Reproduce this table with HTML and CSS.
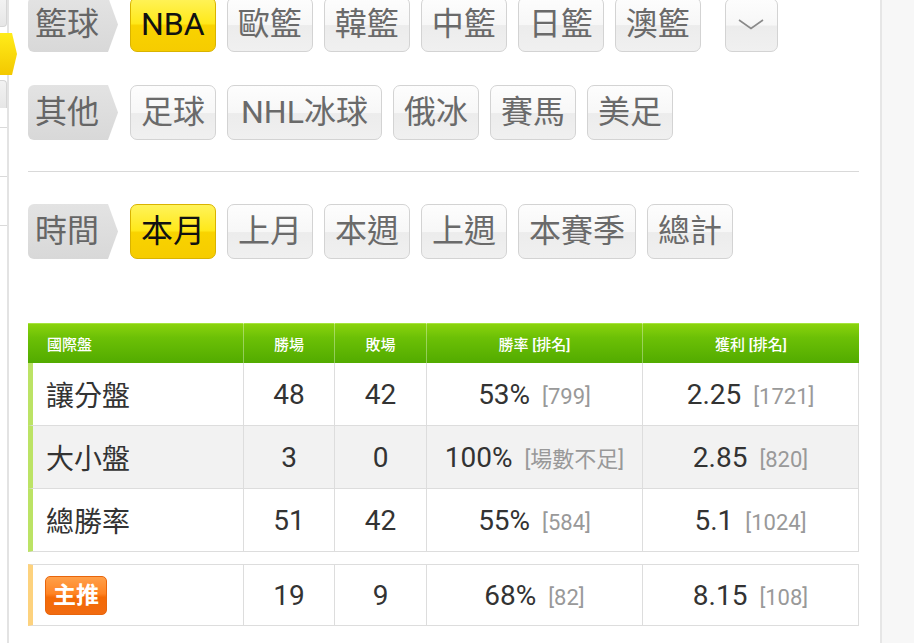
FILE: index.html
```html
<!DOCTYPE html>
<html lang="zh-Hant">
<head>
<meta charset="utf-8">
<title>戰績</title>
<link rel="stylesheet" href="styles.css">
</head>
<body>
<div class="page">
  <aside class="rail">
    <div class="rail-tab"></div>
    <div class="rail-hex"></div>
    <div class="rail-tab rail-tab2"></div>
    <div class="rail-line"></div>
    <div class="rail-line"></div>
    <div class="rail-line"></div>
  </aside>

  <main class="content">
    <div class="filter-row first">
      <span class="flabel">籃球</span>
      <span class="chip active latin">NBA</span>
      <span class="chip">歐籃</span>
      <span class="chip">韓籃</span>
      <span class="chip">中籃</span>
      <span class="chip">日籃</span>
      <span class="chip">澳籃</span>
      <span class="chip more"><svg width="26" height="11" viewBox="0 0 26 11"><polyline points="1,1 13,9.5 25,1" fill="none" stroke="#8a8a8a" stroke-width="1.6"/></svg></span>
    </div>
    <div class="filter-row second">
      <span class="flabel">其他</span>
      <span class="chip">足球</span>
      <span class="chip wide">NHL冰球</span>
      <span class="chip">俄冰</span>
      <span class="chip">賽馬</span>
      <span class="chip">美足</span>
    </div>

    <div class="divider"></div>

    <div class="filter-row time">
      <span class="flabel">時間</span>
      <span class="chip active">本月</span>
      <span class="chip">上月</span>
      <span class="chip">本週</span>
      <span class="chip">上週</span>
      <span class="chip">本賽季</span>
      <span class="chip">總計</span>
    </div>

    <table class="stats">
      <colgroup>
        <col class="c-name"><col class="c-num"><col class="c-num2"><col class="c-wide"><col class="c-wide">
      </colgroup>
      <thead>
        <tr>
          <th class="h-left">國際盤</th>
          <th>勝場</th>
          <th>敗場</th>
          <th>勝率 [排名]</th>
          <th>獲利 [排名]</th>
        </tr>
      </thead>
      <tbody>
        <tr>
          <td class="name">讓分盤</td>
          <td>48</td>
          <td>42</td>
          <td>53%<span class="rank">[799]</span></td>
          <td>2.25<span class="rank">[1721]</span></td>
        </tr>
        <tr class="alt">
          <td class="name">大小盤</td>
          <td>3</td>
          <td>0</td>
          <td>100%<span class="rank">[場數不足]</span></td>
          <td>2.85<span class="rank">[820]</span></td>
        </tr>
        <tr>
          <td class="name">總勝率</td>
          <td>51</td>
          <td>42</td>
          <td>55%<span class="rank">[584]</span></td>
          <td>5.1<span class="rank">[1024]</span></td>
        </tr>
      </tbody>
    </table>

    <table class="stats featured">
      <colgroup>
        <col class="c-name"><col class="c-num"><col class="c-num2"><col class="c-wide"><col class="c-wide">
      </colgroup>
      <tbody>
        <tr>
          <td class="name"><span class="badge">主推</span></td>
          <td>19</td>
          <td>9</td>
          <td>68%<span class="rank">[82]</span></td>
          <td>8.15<span class="rank">[108]</span></td>
        </tr>
      </tbody>
    </table>
  </main>

  <div class="gutter"></div>
</div>
</body>
</html>
```

FILE: styles.css
```css
* { box-sizing: border-box; }

html, body {
  margin: 0;
  padding: 0;
  background: #ffffff;
  height: 100%;
  overflow: hidden;
}

body {
  font-family: Roboto, "Noto Sans CJK TC", "Noto Sans", sans-serif;
  color: #333;
}

.page {
  display: flex;
  width: 914px;
  height: 643px;
}

/* left rail */
.rail {
  position: relative;
  z-index: 1;
  width: 9px;
  flex: none;
  border-right: 2px solid #e3e3e3;
  display: flex;
  flex-direction: column;
}

.rail-tab {
  width: 7px;
  height: 27px;
  background: linear-gradient(#f2f2f2, #e6e6e6);
  border-bottom: 1px solid #d6d6d6;
  border-right: 1px solid #d6d6d6;
  border-radius: 0 0 4px 0;
}

.rail-hex {
  width: 17px;
  height: 42px;
  margin-top: 6px;
  background: linear-gradient(#ffec1a, #f3c800);
  clip-path: polygon(0 0, 12px 0, 100% 50%, 12px 100%, 0 100%);
}

.rail-tab2 {
  height: 28px;
  margin-top: 5px;
  border-radius: 0 4px 0 0;
  border-top: 1px solid #d6d6d6;
  border-bottom: none;
}

.rail-line {
  width: 7px;
  height: 49px;
  border-bottom: 1px solid #dadada;
}
.rail-tab2 + .rail-line { height: 20px; }

/* content */
.content {
  flex: 1;
  padding: 0 21px 0 19px;
}

.filter-row {
  display: flex;
  align-items: center;
  gap: 11px;
  height: 55px;
}
.filter-row.first { margin-top: -3px; }
.filter-row.second { margin-top: 33px; }
.filter-row.time { margin-top: 32px; }

.flabel {
  height: 55px;
  line-height: 55px;
  padding: 0 19px 0 7px;
  margin-right: 1px;
  font-size: 32px;
  color: #666;
  background: linear-gradient(#e3e3e3, #d8d8d8);
  border-radius: 6px 0 0 6px;
  clip-path: polygon(0 0, calc(100% - 10px) 0, 100% 50%, calc(100% - 10px) 100%, 0 100%);
  white-space: nowrap;
}

.chip {
  height: 55px;
  line-height: 53px;
  padding: 0 10px;
  font-size: 32px;
  color: #6a6a6a;
  border: 1px solid #d3d3d3;
  border-radius: 7px;
  background: linear-gradient(#fdfdfd 0%, #f7f7f7 50%, #ececec 52%, #f0f0f0 100%);
  white-space: nowrap;
}

.chip.latin { padding: 0 10px; }
.chip.wide { padding: 0 13px; }

.chip.active {
  color: #111;
  border-color: #d9b300;
  background: linear-gradient(#fff35a 0%, #ffe81a 48%, #f9d300 52%, #f6cc00 100%);
}

.chip.more {
  width: 53px;
  height: 54px;
  margin-left: 13px;
  padding: 0;
  display: flex;
  align-items: center;
  justify-content: center;
}

.divider {
  margin-top: 31px;
  height: 1px;
  background: #d9d9d9;
}

/* tables */
.stats {
  width: 831px;
  margin-left: 0;
  border-collapse: separate;
  border-spacing: 0;
  table-layout: fixed;
  margin-top: 64px;
}

.c-name { width: 216px; }
.c-num { width: 91px; }
.c-num2 { width: 92px; }
.c-wide { width: 216px; }

.stats th {
  height: 40px;
  padding: 0;
  font-size: 15px;
  font-weight: 500;
  color: #fff;
  text-align: center;
  background: linear-gradient(#8ad30c 0%, #6cc006 35%, #52ab00 100%);
  border-right: 1px solid rgba(255, 255, 255, 0.35);
  border-top: 1px solid #a6e43c;
}
.stats th:last-child { border-right: none; }
.stats th.h-left {
  text-align: left;
  padding-left: 19px;
}

.stats td {
  height: 63px;
  padding: 0;
  text-align: center;
  font-size: 28px;
  color: #333;
  background: #fff;
  border-right: 1px solid #dddddd;
  border-bottom: 1px solid #dddddd;
  white-space: nowrap;
}

.stats tr.alt td { background: #f2f2f2; }

.stats td.name {
  text-align: left;
  padding-left: 13px;
  border-left: 5px solid #bce365;
}

.rank {
  margin-left: 12px;
  font-size: 22px;
  color: #999;
}

.featured { margin-top: 12px; }
.featured td {
  height: 62px;
  border-top: 1px solid #dddddd;
}
.featured td.name {
  border-left-color: #fdd27e;
  padding-left: 12px;
}

.badge {
  display: inline-block;
  width: 62px;
  height: 39px;
  line-height: 38px;
  text-align: center;
  vertical-align: middle;
  font-size: 23px;
  font-weight: 700;
  color: #fff;
  border-radius: 5px;
  border: 1px solid #e8650c;
  background: linear-gradient(#ffa04a 0%, #ff8424 45%, #f46a06 55%, #f16b10 100%);
}

/* right gutter */
.gutter {
  width: 34px;
  flex: none;
  background: #f7f7f7;
  border-left: 2px solid #e6e6e6;
}
```
